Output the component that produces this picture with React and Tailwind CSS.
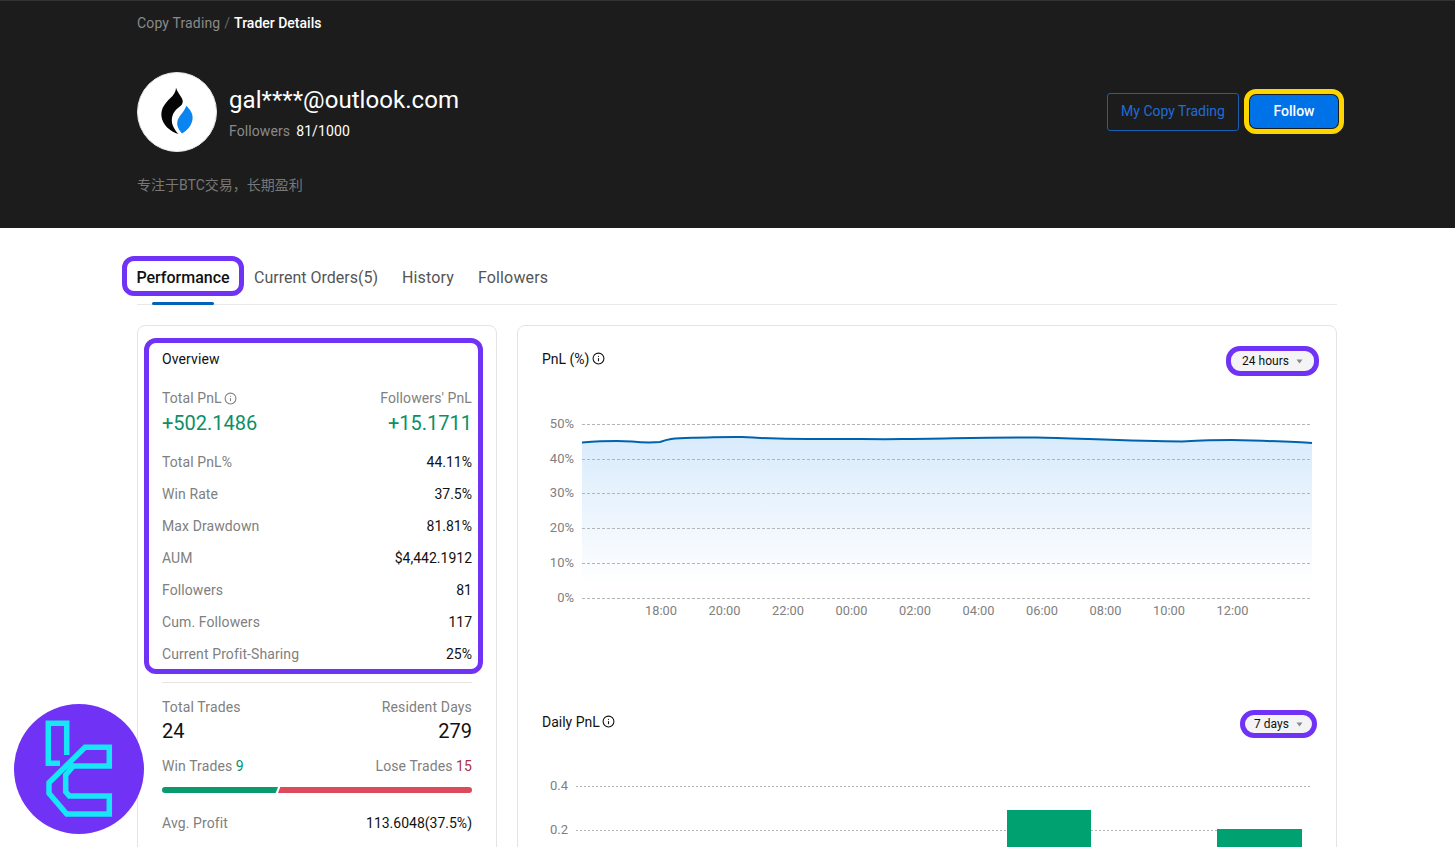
import { Info } from 'lucide-react'

const FONT = 'font-[Roboto,"Noto_Sans_CJK_SC",sans-serif]'

const overviewRows = [
  ['Total PnL%', '44.11%'],
  ['Win Rate', '37.5%'],
  ['Max Drawdown', '81.81%'],
  ['AUM', '$4,442.1912'],
  ['Followers', '81'],
  ['Cum. Followers', '117'],
  ['Current Profit-Sharing', '25%'],
]

const pnlGrid = [
  ['50%', 14],
  ['40%', 49],
  ['30%', 83],
  ['20%', 118],
  ['10%', 153],
  ['0%', 188],
]

const pnlTimes = ['18:00', '20:00', '22:00', '00:00', '02:00', '04:00', '06:00', '08:00', '10:00', '12:00']

// chart line, in the svg's own coordinates (svg starts at x=542, y=410)
const pnlLine =
  'M40 32.5C60 31 75 30.5 90 31.5C100 32.5 105 33 118 32C125 29.5 130 28 150 27.7C165 28 180 26.5 200 27C225 28.5 250 29.5 280 29C310 28.5 330 29.5 360 29C400 29 440 27 495 27.500C530 28 590 31.5 640 31.5C670 30 690 29.500 710 30.500C740 31.5 755 32 770 33'

function Caret() {
  return (
    <svg width="7" height="5" viewBox="0 0 7 5" className="text-[#8a8a8a]" fill="currentColor">
      <path d="M0.5 0.5h6L3.500 4.500z" />
    </svg>
  )
}

function RangePill({ label, className }) {
  return (
    <div className={`flex items-center justify-center rounded-[14px] border-[5px] border-[#7033f5] bg-[#f4f4f6] text-xs text-[#111] gap-[7px] ${className}`}>
      {label}
      <Caret />
    </div>
  )
}

function Flame() {
  return (
    <svg width="80" height="80" viewBox="0 0 80 80">
      <path d="M39 15C40 19 43 22 45 26C47 30 45.500 33 42 35C37.500 38.500 35 42 34.700 48C34.500 53.500 37.500 58.500 41.500 62.500C33 60 25 53 24 44C23.500 36 28 31 33 26C36.500 22.500 39 19 39 15Z" fill="#050505" />
      <path d="M49.500 33.500C53 37 56.500 41 56 47C55.500 53 51 59 45 62C41.500 58 39.500 54 40.300 50C41.300 44 47 41 49.500 33.500Z" fill="#0a84f0" />
    </svg>
  )
}

function BrandBadge() {
  return (
    <div className="absolute left-[14px] top-[704px] h-[130px] w-[130px] rounded-full bg-[#7033f5]">
      <svg width="130" height="130" viewBox="0 0 130 130" fill="none" stroke="#17e6f9" strokeWidth="5.500">
        <path d="M52.700 51V19.300H34.300V59.300H46" />
        <path d="M71 43.300H95.300V62H59.300L51.700 71V87.700L55.300 92H95.300V110H52.700L35 89.300V78.700Z" />
      </svg>
    </div>
  )
}

function PnlChart() {
  return (
    <svg width="770" height="215" viewBox="0 0 770 215" className="mt-[34px] block">
      <defs>
        <linearGradient id="pnlFill" x1="0" y1="0" x2="0" y2="1">
          <stop offset="0" stopColor="#d9ebfc" />
          <stop offset="0.5" stopColor="#ebf4fd" />
          <stop offset="1" stopColor="#ffffff" />
        </linearGradient>
      </defs>
      <path d={`${pnlLine}V175H40Z`} fill="url(#pnlFill)" />
      {pnlGrid.map(([label, y]) => (
        <g key={label}>
          <line x1="40" x2="770" y1={y + 0.5} y2={y + 0.5} stroke="#b5b5b5" strokeDasharray="3 2" />
          <text x="32" y={y + 3.5} textAnchor="end" fontSize="13" fill="#808080">{label}</text>
        </g>
      ))}
      <path d={pnlLine} fill="none" stroke="#0062ad" strokeWidth="2" />
      {pnlTimes.map((t, i) => (
        <text key={t} x={119 + i * 63.500} y="205" textAnchor="middle" fontSize="12.800" fill="#808080">{t}</text>
      ))}
    </svg>
  )
}

function DailyChart() {
  return (
    <svg width="770" height="72" viewBox="0 0 770 72" className="mt-[37px] block">
      <rect x="465" y="35" width="84" height="40" fill="#00a170" />
      <rect x="675" y="54" width="85" height="20" fill="#00a170" />
      <line x1="34" x2="770" y1="11.500" y2="11.500" stroke="#b5b5b5" strokeDasharray="2 2" />
      <line x1="34" x2="465" y1="55.500" y2="55.500" stroke="#b5b5b5" strokeDasharray="2 2" />
      <line x1="549" x2="675" y1="55.500" y2="55.500" stroke="#b5b5b5" strokeDasharray="2 2" />
      <text x="26" y="15" textAnchor="end" fontSize="13" fill="#808080">0.4</text>
      <text x="26" y="59" textAnchor="end" fontSize="13" fill="#808080">0.2</text>
    </svg>
  )
}

export default function App() {
  return (
    <div className={`relative h-[847px] overflow-hidden bg-white ${FONT}`}>
      <header className="h-[228px] border-t border-[#333] bg-[#1c1c1c]">
        <div className="ml-[137px] w-[1200px]">
          <div className="flex h-[44px] items-center pb-[1px] text-sm">
            <span className="tracking-[0.15px] text-[#8a8a8a]">Copy Trading</span>
            <span className="mx-[4px] text-[#666]">/</span>
            <span className="font-medium text-white">Trader Details</span>
          </div>
          <div className="mt-[27px] flex items-center justify-between">
            <div className="flex items-center gap-3">
              <div className="h-20 w-20 rounded-full border border-[#e6e6e6] bg-white overflow-hidden flex items-center justify-center">
                <Flame />
              </div>
              <div>
                <div className="text-2xl leading-[32px] tracking-[0.05px] text-white">gal****@outlook.com</div>
                <div className="mt-[5px] flex text-sm leading-5 tracking-[0.1px]">
                  <span className="text-[#8a8a8a]">Followers</span>
                  <span className="ml-[6px] text-white">81/1000</span>
                </div>
              </div>
            </div>
            <div className="-mr-[7px] mb-[2px] flex items-center gap-[5px]">
              <button className="mt-[1px] h-[38px] w-[132px] rounded-[3px] border border-[#1a5fb0] pb-[1px] text-sm text-[#1f6cd8]">My Copy Trading</button>
              <div className="h-[45px] w-[100px] rounded-[12px] border-[5px] border-[#fdd600] bg-[#1c1c1c] p-[1px]">
                <button className="h-full w-full rounded-[6px] bg-[#0072e8] text-sm font-medium text-white">Follow</button>
              </div>
            </div>
          </div>
          <p className="mt-[23px] text-sm leading-5 text-[#777]">专注于BTC交易，长期盈利</p>
        </div>
      </header>

      <main className="ml-[137px] w-[1200px]">
        <nav className="relative mt-[28px] flex h-[49px] items-start border-b border-[#e8e8e8] text-base text-[#555]">
          <div className="-ml-[15px] flex h-[40px] w-[122px] items-center justify-center rounded-[12px] border-[5px] border-[#7033f5] pt-[4px] font-medium text-[#111]">Performance</div>
          <span className="ml-[10px] flex h-[40px] items-center pt-[4px]">Current Orders(5)</span>
          <span className="ml-6 flex h-[40px] items-center pt-[4px] tracking-[0.15px]">History</span>
          <span className="ml-6 flex h-[40px] items-center pt-[4px] tracking-[0.15px]">Followers</span>
          <div className="absolute left-[15px] -bottom-[1px] h-[3px] w-[62px] rounded-sm bg-[#0063b8]" />
        </nav>

        <div className="mt-[20px] flex gap-5">
          <section className="h-[600px] w-[360px] shrink-0 rounded-lg border border-[#e4e4e4] pt-[12px] text-sm">
            <div className="ml-[6px] mr-[13px] h-[336px] rounded-[12px] border-[5px] border-[#7033f5] pl-[13px] pr-[6px]">
              <div className="pt-[6px] leading-5 tracking-[0.1px] text-[#111]">Overview</div>
              <div className="mt-[19px] flex justify-between leading-5 tracking-[0.1px] text-[#808080]">
                <span className="flex items-center gap-[2px]">Total PnL<Info size={13} strokeWidth={2} /></span>
                <span>Followers' PnL</span>
              </div>
              <div className="mt-[1px] flex justify-between text-xl leading-7 text-[#0b8f68]">
                <span>+502.1486</span>
                <span>+15.1711</span>
              </div>
              <div className="mt-[9px]">
                {overviewRows.map(([label, value]) => (
                  <div key={label} className="flex h-[32px] items-center justify-between">
                    <span className="tracking-[0.1px] text-[#808080]">{label}</span>
                    <span className="text-[#111]">{value}</span>
                  </div>
                ))}
              </div>
            </div>
            <div className="mx-6 mt-[8px] border-t border-[#e4e4e4] pt-[14px]">
              <div className="flex justify-between leading-5 tracking-[0.15px] text-[#808080]">
                <span>Total Trades</span>
                <span>Resident Days</span>
              </div>
              <div className="flex justify-between text-xl leading-7 text-[#111]">
                <span>24</span>
                <span>279</span>
              </div>
              <div className="mt-[11px] flex justify-between leading-5 tracking-[0.1px] text-[#808080]">
                <span>Win Trades <span className="text-[#0b8f68]">9</span></span>
                <span>Lose Trades <span className="text-[#a8324a]">15</span></span>
              </div>
              <div className="mt-[11px] flex h-[6px]">
                <div className="w-[116px] rounded-l-full bg-[#0a9a6e] [clip-path:polygon(0_0,100%_0,calc(100%-2.3px)_100%,0_100%)]" />
                <div className="flex-1 rounded-r-full bg-[#dc4a5c] [clip-path:polygon(2.3px_0,100%_0,100%_100%,0_100%)]" />
              </div>
              <div className="mt-[20px] flex justify-between leading-5">
                <span className="tracking-[0.1px] text-[#808080]">Avg. Profit</span>
                <span className="text-[#111]">113.6048(37.5%)</span>
              </div>
            </div>
          </section>

          <section className="h-[600px] flex-1 rounded-lg border border-[#e4e4e4] px-6 pt-[20px] text-sm text-[#111]">
            <div className="flex items-start justify-between">
              <span className="mt-[3px] flex items-center gap-[2px] leading-5">PnL (%)<Info size={13} strokeWidth={2} className="-translate-y-px" /></span>
              <RangePill label="24 hours" className="-mr-[7px] h-[30px] w-[93px]" />
            </div>
            <PnlChart />
            <div className="mt-[85px] flex items-start justify-between">
              <span className="mt-[2px] flex items-center gap-[2px] leading-5">Daily PnL<Info size={13} strokeWidth={2} className="-translate-y-px" /></span>
              <RangePill label="7 days" className="-mr-[5px] h-[28px] w-[77px]" />
            </div>
            <DailyChart />
          </section>
        </div>
      </main>

      <BrandBadge />
    </div>
  )
}
